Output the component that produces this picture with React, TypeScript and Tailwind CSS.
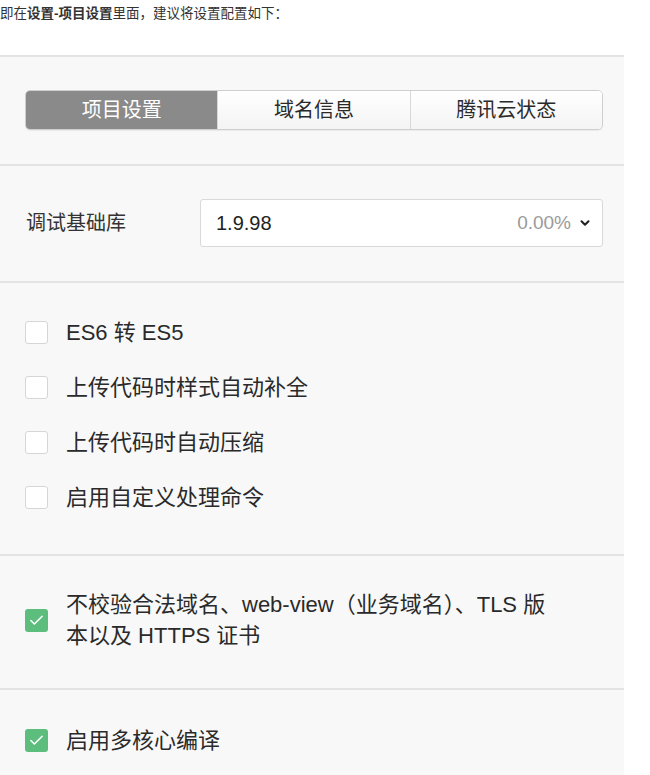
import { Check, ChevronDown } from "lucide-react";

const FONT = "font-['Liberation_Sans','Noto_Sans_CJK_SC',sans-serif]";

const Box = ({ checked }: { checked?: boolean }) =>
    checked ? (
        <div className="flex h-[23px] w-[23px] shrink-0 items-center justify-center rounded-[3px] bg-[#5cbd7d]">
            <Check size={17} strokeWidth={2.2} className="text-white" />
        </div>
    ) : (
        <div className="h-[23px] w-[23px] shrink-0 rounded-[3px] border border-[#d6d6d6] bg-white" />
    );

const Section = ({ className, children }: { className: string; children: React.ReactNode }) => (
    <div className={`border-b-2 border-[#e3e3e3] ${className}`}>{children}</div>
);

export default function App() {
    const tabs = ["项目设置", "域名信息", "腾讯云状态"];
    const options = ["ES6 转 ES5", "上传代码时样式自动补全", "上传代码时自动压缩", "启用自定义处理命令"];

    return (
        <div className={`min-h-[775px] w-[650px] bg-white ${FONT}`}>
            <p className="h-[55px] pt-[5px] text-[13.5px] leading-[18px] text-[#333]">
                即在<b>设置-项目设置</b>里面，建议将设置配置如下：
            </p>

            <div className="w-[624px] border-t-2 border-[#e3e3e3] bg-[#f8f8f8] pb-[40px]">
                {/* Tabs */}
                <Section className="pl-[25px] pr-[21px] pt-[33px] pb-[34px]">
                    <div className="flex h-[40px] overflow-hidden rounded-[5px] border border-[#cfcfcf] shadow-[0_1px_1px_rgba(0,0,0,0.06)]">
                        {tabs.map((t, i) => (
                            <div
                                key={t}
                                className={
                                    i === 0
                                        ? "flex flex-1 items-center justify-center bg-[#8a8a8a] text-[20px] text-white"
                                        : "flex flex-1 items-center justify-center border-l border-[#d8d8d8] bg-gradient-to-b from-white to-[#f4f4f4] text-[20px] text-[#2a2a2a]"
                                }
                            >
                                {t}
                            </div>
                        ))}
                    </div>
                </Section>

                {/* Base library */}
                <Section className="flex items-center pl-[26px] pr-[21px] pt-[33px] pb-[34px]">
                    <span className="w-[174px] text-[20px] text-[#333]">调试基础库</span>
                    <div className="flex h-[48px] flex-1 items-center rounded-[3px] border border-[#d9d9d9] bg-white pl-[15px] pr-[10px]">
                        <span className="flex-1 text-[20px] text-[#222]">1.9.98</span>
                        <span className="text-[19px] text-[#9a9a9a]">0.00%</span>
                        <ChevronDown size={14} strokeWidth={3.5} className="ml-[7px] text-[#222]" />
                    </div>
                </Section>

                {/* Options */}
                <Section className="flex flex-col gap-[24px] px-[25px] pt-[34px] pb-[41px]">
                    {options.map((o) => (
                        <div key={o} className="flex h-[31px] items-center gap-[18px]">
                            <Box />
                            <span className="text-[22px] leading-[31px] text-[#2a2a2a]">{o}</span>
                        </div>
                    ))}
                </Section>

                <Section className="flex items-center gap-[18px] px-[25px] pt-[33px] pb-[37px]">
                    <Box checked />
                    <span className="text-[22px] leading-[31px] text-[#2a2a2a]">
                        不校验合法域名、web-view（业务域名）、TLS 版
                        <br />
                        本以及 HTTPS 证书
                    </span>
                </Section>

                <div className="flex items-center gap-[18px] px-[25px] pt-[35px]">
                    <Box checked />
                    <span className="text-[22px] leading-[31px] text-[#2a2a2a]">启用多核心编译</span>
                </div>
            </div>
        </div>
    );
}
